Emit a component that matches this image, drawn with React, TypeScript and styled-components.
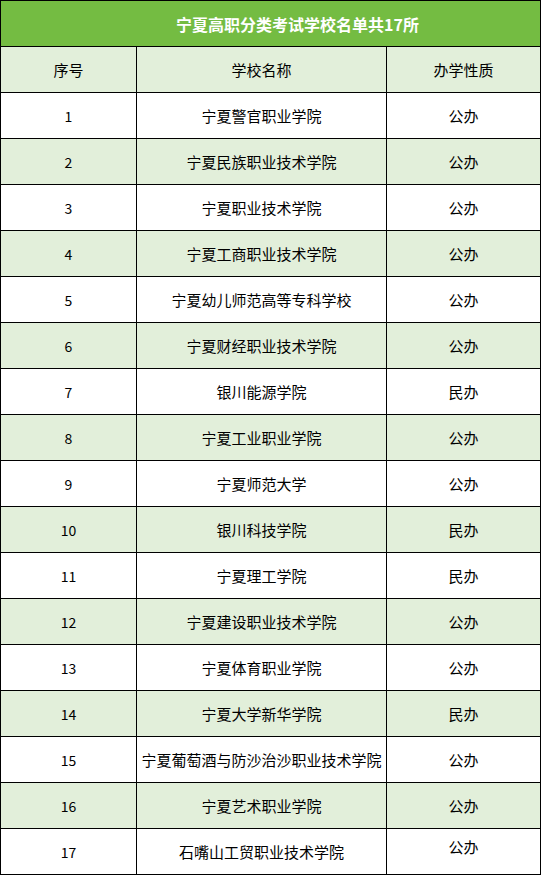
import React from "react";
import styled, { createGlobalStyle } from "styled-components";

const GlobalStyle = createGlobalStyle`
  html, body {
    margin: 0;
    padding: 0;
    background: #ffffff;
  }
  body {
    font-family: "Noto Sans CJK SC", "Noto Sans", sans-serif;
    color: #000000;
  }
`;

type School = { no: number; name: string; kind: string };

const schools: School[] = [
  { no: 1, name: "宁夏警官职业学院", kind: "公办" },
  { no: 2, name: "宁夏民族职业技术学院", kind: "公办" },
  { no: 3, name: "宁夏职业技术学院", kind: "公办" },
  { no: 4, name: "宁夏工商职业技术学院", kind: "公办" },
  { no: 5, name: "宁夏幼儿师范高等专科学校", kind: "公办" },
  { no: 6, name: "宁夏财经职业技术学院", kind: "公办" },
  { no: 7, name: "银川能源学院", kind: "民办" },
  { no: 8, name: "宁夏工业职业学院", kind: "公办" },
  { no: 9, name: "宁夏师范大学", kind: "公办" },
  { no: 10, name: "银川科技学院", kind: "民办" },
  { no: 11, name: "宁夏理工学院", kind: "民办" },
  { no: 12, name: "宁夏建设职业技术学院", kind: "公办" },
  { no: 13, name: "宁夏体育职业学院", kind: "公办" },
  { no: 14, name: "宁夏大学新华学院", kind: "民办" },
  { no: 15, name: "宁夏葡萄酒与防沙治沙职业技术学院", kind: "公办" },
  { no: 16, name: "宁夏艺术职业学院", kind: "公办" },
  { no: 17, name: "石嘴山工贸职业技术学院", kind: "公办" },
];

const Sheet = styled.div`
  width: 541px;
  box-sizing: border-box;
  border-top: 1px solid #000;
  border-left: 1px solid #000;
`;

const Title = styled.div`
  height: 46px;
  box-sizing: border-box;
  border-right: 1px solid #000;
  border-bottom: 1px solid #000;
  background: #74bc42;
  color: #ffffff;
  font-size: 16px;
  font-weight: 700;
  display: flex;
  align-items: center;
  justify-content: center;
  padding-left: 54px;
`;

const Row = styled.div<{ $shade: boolean }>`
  display: grid;
  grid-template-columns: 136px 250px 154px;
  background: ${(p) => (p.$shade ? "#e2efda" : "#ffffff")};
`;

const Cell = styled.div<{ $raised?: boolean }>`
  height: 46px;
  box-sizing: border-box;
  border-right: 1px solid #000;
  border-bottom: 1px solid #000;
  display: flex;
  align-items: center;
  justify-content: center;
  font-size: 15px;
  line-height: 1;
  white-space: nowrap;
  padding-bottom: ${(p) => (p.$raised ? "10px" : "0")};
`;

const Num = styled(Cell)`
  font-size: 14px;
`;

export default function App() {
  return (
    <>
      <GlobalStyle />
      <Sheet>
        <Title>宁夏高职分类考试学校名单共17所</Title>
        <Row $shade>
          <Cell>序号</Cell>
          <Cell>学校名称</Cell>
          <Cell>办学性质</Cell>
        </Row>
        {schools.map((s, i) => (
          <Row key={s.no} $shade={i % 2 === 1}>
            <Num>{s.no}</Num>
            <Cell>{s.name}</Cell>
            <Cell $raised={s.no === 17}>{s.kind}</Cell>
          </Row>
        ))}
      </Sheet>
    </>
  );
}
